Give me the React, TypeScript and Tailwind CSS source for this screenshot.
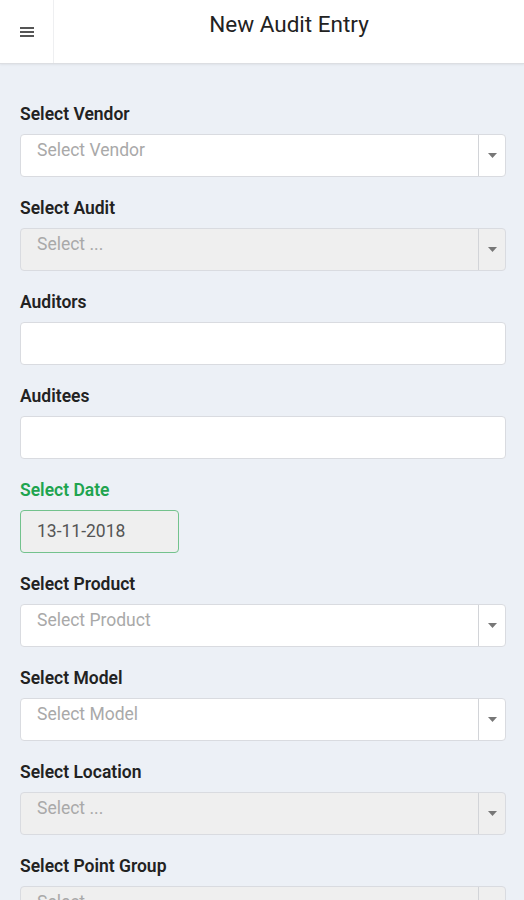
import React from 'react';

type Field =
  | { kind: 'select'; label: string; placeholder: string; disabled?: boolean }
  | { kind: 'text'; label: string }
  | { kind: 'date'; label: string; value: string };

const fields: Field[] = [
  { kind: 'select', label: 'Select Vendor', placeholder: 'Select Vendor' },
  { kind: 'select', label: 'Select Audit', placeholder: 'Select ...', disabled: true },
  { kind: 'text', label: 'Auditors' },
  { kind: 'text', label: 'Auditees' },
  { kind: 'date', label: 'Select Date', value: '13-11-2018' },
  { kind: 'select', label: 'Select Product', placeholder: 'Select Product' },
  { kind: 'select', label: 'Select Model', placeholder: 'Select Model' },
  { kind: 'select', label: 'Select Location', placeholder: 'Select ...', disabled: true },
  { kind: 'select', label: 'Select Point Group', placeholder: 'Select ...', disabled: true },
];

function SelectBox({ placeholder, disabled }: { placeholder: string; disabled?: boolean }) {
  return (
    <div
      className={`flex h-[43px] rounded-[4px] border border-[#d9dbe0] ${disabled ? 'bg-[#efefef]' : 'bg-white'}`}
    >
      <div className="flex-1 pl-4 pt-[2px] text-[17.5px] text-[#a9a9a9]">{placeholder}</div>
      <div className="flex w-[27px] items-center justify-center border-l border-[#d2d4d8]">
        <svg width="9" height="5" viewBox="0 0 9 5">
          <path d="M0 0h9L4.5 5z" fill="#777" />
        </svg>
      </div>
    </div>
  );
}

export default function App() {
  return (
    <div className="min-h-screen bg-[#ecf0f6]" style={{ fontFamily: 'Roboto, "Noto Sans", sans-serif' }}>
      <header className="flex h-[64px] border-b border-[#dcdee2] bg-white shadow-[0_1px_2px_rgba(0,0,0,0.06)]">
        <div className="flex w-[54px] items-center justify-center border-r border-[#eeeff1]">
          <svg width="14" height="12" viewBox="0 0 14 12">
            <rect x="0" y="1" width="14" height="2" fill="#555" />
            <rect x="0" y="5" width="14" height="2" fill="#555" />
            <rect x="0" y="9" width="14" height="2" fill="#555" />
          </svg>
        </div>
        <div className="flex-1 pt-[8px] text-center text-[22.5px] text-[#222]">New Audit Entry</div>
      </header>

      <main className="flex flex-col gap-[21px] pl-5 pr-[18px] pt-[40px]">
        {fields.map((f) => (
          <div key={f.label} className="flex flex-col gap-[10px]">
            <label
              className={`text-[17.5px] font-semibold leading-[20px] ${f.kind === 'date' ? 'text-[#1ea44f]' : 'text-[#222]'}`}
            >
              {f.label}
            </label>
            {f.kind === 'select' && <SelectBox placeholder={f.placeholder} disabled={f.disabled} />}
            {f.kind === 'text' && <div className="h-[43px] rounded-[4px] border border-[#d9dbe0] bg-white" />}
            {f.kind === 'date' && (
              <div className="flex h-[43px] w-[159px] items-center rounded-[4px] border border-[#73c28d] bg-[#efefef] pl-4 text-[17.5px] text-[#555]">
                {f.value}
              </div>
            )}
          </div>
        ))}
      </main>
    </div>
  );
}
